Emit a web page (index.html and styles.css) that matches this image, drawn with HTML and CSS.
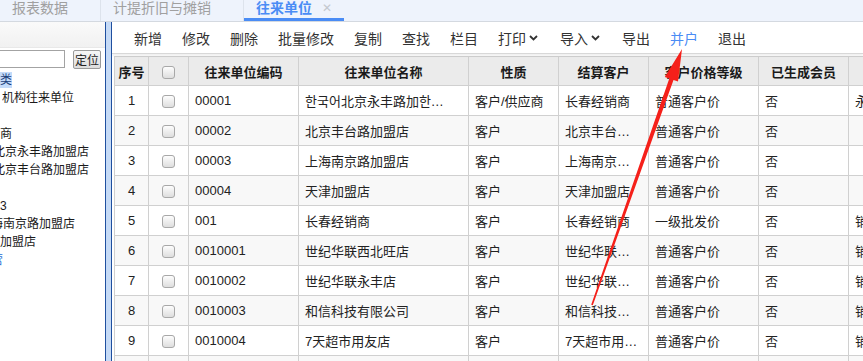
FILE: index.html
```html
<!DOCTYPE html>
<html lang="zh-CN">
<head>
<meta charset="utf-8">
<title>往来单位</title>
<link rel="stylesheet" href="styles.css">
</head>
<body>
<div class="tabbar">
  <div class="tab">报表数据</div>
  <div class="tab">计提折旧与摊销</div>
  <div class="tab active"><span>往来单位</span><span class="close">✕</span></div>
</div>
<div class="main">
  <div class="left">
    <div class="left-head"></div>
    <div class="search">
      <input class="search-input" type="text">
      <button class="locate">定位</button>
    </div>
    <ul class="tree">
      <li class="t0"><span class="sel">类</span></li>
      <li class="t1">机构往来单位</li>
      <li class="t0"></li>
      <li class="t0">商</li>
      <li class="t2">北京永丰路加盟店</li>
      <li class="t2">北京丰台路加盟店</li>
      <li class="t0"></li>
      <li class="t0">3</li>
      <li class="t3">海南京路加盟店</li>
      <li class="t0">加盟店</li>
      <li class="t4">营</li>
    </ul>
  </div>
  <div class="divider"></div>
  <div class="right">
    <div class="toolbar">
      <span class="btn">新增</span>
      <span class="btn">修改</span>
      <span class="btn">删除</span>
      <span class="btn">批量修改</span>
      <span class="btn">复制</span>
      <span class="btn">查找</span>
      <span class="btn">栏目</span>
      <span class="btn">打印<svg class="caret" width="9" height="6" viewBox="0 0 9 6"><polyline points="1,1 4.5,4.5 8,1" fill="none" stroke="#333" stroke-width="1.8"/></svg></span>
      <span class="btn">导入<svg class="caret" width="9" height="6" viewBox="0 0 9 6"><polyline points="1,1 4.5,4.5 8,1" fill="none" stroke="#333" stroke-width="1.8"/></svg></span>
      <span class="btn">导出</span>
      <span class="btn blue">并户</span>
      <span class="btn">退出</span>
    </div>
    <div class="grid-wrap">
      <table class="grid">
        <colgroup>
          <col class="c-no"><col class="c-cb"><col class="c-code"><col class="c-name"><col class="c-type"><col class="c-settle"><col class="c-price"><col class="c-member"><col class="c-dept">
        </colgroup>
        <thead>
          <tr><th>序号</th><th><span class="cb"></span></th><th>往来单位编码</th><th>往来单位名称</th><th>性质</th><th>结算客户</th><th>客户价格等级</th><th>已生成会员</th><th>所属部门</th></tr>
        </thead>
        <tbody>
          <tr><td class="ctr">1</td><td class="ctr"><span class="cb"></span></td><td>00001</td><td>한국어北京永丰路加한…</td><td>客户/供应商</td><td>长春经销商</td><td>普通客户价</td><td>否</td><td>永丰店</td></tr>
          <tr><td class="ctr">2</td><td class="ctr"><span class="cb"></span></td><td>00002</td><td>北京丰台路加盟店</td><td>客户</td><td>北京丰台…</td><td>普通客户价</td><td>否</td><td></td></tr>
          <tr><td class="ctr">3</td><td class="ctr"><span class="cb"></span></td><td>00003</td><td>上海南京路加盟店</td><td>客户</td><td>上海南京…</td><td>普通客户价</td><td>否</td><td></td></tr>
          <tr><td class="ctr">4</td><td class="ctr"><span class="cb"></span></td><td>00004</td><td>天津加盟店</td><td>客户</td><td>天津加盟店</td><td>普通客户价</td><td>否</td><td></td></tr>
          <tr><td class="ctr">5</td><td class="ctr"><span class="cb"></span></td><td>001</td><td>长春经销商</td><td>客户</td><td>长春经销商</td><td>一级批发价</td><td>否</td><td>销售部</td></tr>
          <tr><td class="ctr">6</td><td class="ctr"><span class="cb"></span></td><td>0010001</td><td>世纪华联西北旺店</td><td>客户</td><td>世纪华联…</td><td>普通客户价</td><td>否</td><td>销售部</td></tr>
          <tr><td class="ctr">7</td><td class="ctr"><span class="cb"></span></td><td>0010002</td><td>世纪华联永丰店</td><td>客户</td><td>世纪华联…</td><td>普通客户价</td><td>否</td><td>销售部</td></tr>
          <tr><td class="ctr">8</td><td class="ctr"><span class="cb"></span></td><td>0010003</td><td>和信科技有限公司</td><td>客户</td><td>和信科技…</td><td>普通客户价</td><td>否</td><td>销售部</td></tr>
          <tr><td class="ctr">9</td><td class="ctr"><span class="cb"></span></td><td>0010004</td><td>7天超市用友店</td><td>客户</td><td>7天超市用…</td><td>普通客户价</td><td>否</td><td>销售部</td></tr>
          <tr><td class="ctr">10</td><td class="ctr"><span class="cb"></span></td><td>0010005</td><td>世纪华联中关村店</td><td>客户</td><td>世纪华联…</td><td>普通客户价</td><td>否</td><td>销售部</td></tr>
        </tbody>
      </table>
    </div>
  </div>
</div>
<svg class="arrow" width="863" height="361" viewBox="0 0 863 361">
  <polygon points="682,49 678,81.5 673.5,79.9 592.8,305.3 591.2,304.7 669.3,78.5 664.8,76.9" fill="#f5201a"/>
</svg>
</body>
</html>
```
FILE: styles.css
```css
* { box-sizing: border-box; }
html, body { margin: 0; padding: 0; }
body {
  width: 863px;
  height: 361px;
  overflow: hidden;
  position: relative;
  background: #fff;
  color: #222;
  font-family: "Liberation Sans", "Noto Sans CJK SC", sans-serif;
}

/* tab bar */
.tabbar {
  height: 22px;
  background: #eef3fc;
  border-bottom: 1px solid #d4d9e0;
  display: flex;
}
.tab {
  height: 21px;
  padding: 0 32px 0 12px;
  font-size: 14px;
  line-height: 17px;
  color: #a0a0a0;
  border-right: 1px solid #dde3ec;
  display: flex;
  align-items: flex-start;
}
.tab.active {
  padding-right: 12px;
  color: #4a8cf5;
  font-weight: bold;
  border-right: none;
  border-bottom: 3px solid #4a8cf5;
}
.tab .close {
  margin-left: 10px;
  font-size: 12px;
  font-weight: normal;
  color: #c4c8ce;
  line-height: 17px;
}

/* main area */
.main {
  display: flex;
  height: 339px;
}
.left {
  width: 105px;
  flex: none;
  overflow: hidden;
  background: #fff;
}
.left-head {
  height: 26px;
  background: linear-gradient(#fafafa, #f1f1f1);
  border-bottom: 1px solid #e8e8e8;
}
.search {
  display: flex;
  align-items: flex-start;
  padding-top: 2px;
}
.search-input {
  margin: 0 0 0 -5px;
  width: 70px;
  height: 18px;
  border: 1px solid #a3a3a3;
  padding: 0;
  background: #fff;
}
.locate {
  margin: 0 0 0 8px;
  width: 28px;
  height: 19px;
  padding: 0;
  font-family: "Noto Sans CJK SC", sans-serif;
  font-size: 12px;
  line-height: 17px;
  color: #222;
  background: linear-gradient(#f7f7f7, #dcdcdc);
  border: 1px solid #9a9a9a;
  border-radius: 2px;
}
.tree {
  list-style: none;
  margin: 2px 0 0;
  padding: 0;
  font-size: 12px;
  line-height: 18px;
  white-space: nowrap;
  color: #1a1a1a;
}
.tree li { height: 18px; }
.tree .t0 { padding-left: 0; }
.tree .t1 { padding-left: 2px; }
.tree .t2 { margin-left: -7px; }
.tree .t3 { margin-left: -9px; }
.tree .t4 { margin-left: -9px; color: #2a6fd6; }
.tree .sel {
  background: #c4dbfa;
  color: #1b3f7a;
  padding: 1px 0;
}

.divider {
  width: 7px;
  flex: none;
  background: #c5daf6;
  border-left: 1px solid #1f4f9f;
  border-right: 1px solid #1f4f9f;
}

.right {
  flex: 1;
  overflow: hidden;
  background: #fff;
}
.toolbar {
  height: 32px;
  display: flex;
  align-items: center;
  padding-left: 12px;
  border-bottom: 1px solid #d8d8d8;
  box-shadow: 0 2px 2px rgba(0, 0, 0, 0.06);
  position: relative;
}
.btn {
  padding: 0 10px;
  font-family: "Noto Sans CJK SC", sans-serif;
  font-size: 14px;
  line-height: 20px;
  color: #333;
  display: flex;
  align-items: center;
  white-space: nowrap;
}
.btn.blue { color: #4a8cf5; }
.caret {
  margin-left: 3px;
  margin-right: 2px;
}

.grid-wrap {
  padding: 2px 0 0 2px;
  overflow: hidden;
}
.grid {
  border-collapse: collapse;
  table-layout: fixed;
  width: 854px;
  font-size: 13px;
  color: #222;
}
.c-no { width: 34px; }
.c-cb { width: 40px; }
.c-code { width: 110px; }
.c-name { width: 170px; }
.c-type { width: 90px; }
.c-settle { width: 90px; }
.c-price { width: 110px; }
.c-member { width: 90px; }
.c-dept { width: 120px; }
.grid th, .grid td {
  border: 1px solid #d0d0d0;
  white-space: nowrap;
  overflow: hidden;
  vertical-align: middle;
}
.grid th {
  height: 29px;
  padding: 0;
  background: #ebebeb;
  font-weight: bold;
  text-align: center;
  color: #1a1a1a;
}
.grid td {
  height: 30px;
  padding: 0 6px;
  text-align: left;
}
.grid td.ctr { text-align: center; padding: 0; }
.grid tbody tr:nth-child(even) td { background: #f8f8f8; }
.cb {
  display: inline-block;
  width: 13px;
  height: 13px;
  border: 1px solid #a8a8a8;
  border-radius: 3px;
  background: linear-gradient(#fdfdfd, #dedede);
  vertical-align: middle;
}

.arrow {
  position: absolute;
  left: 0;
  top: 0;
  pointer-events: none;
}
```
